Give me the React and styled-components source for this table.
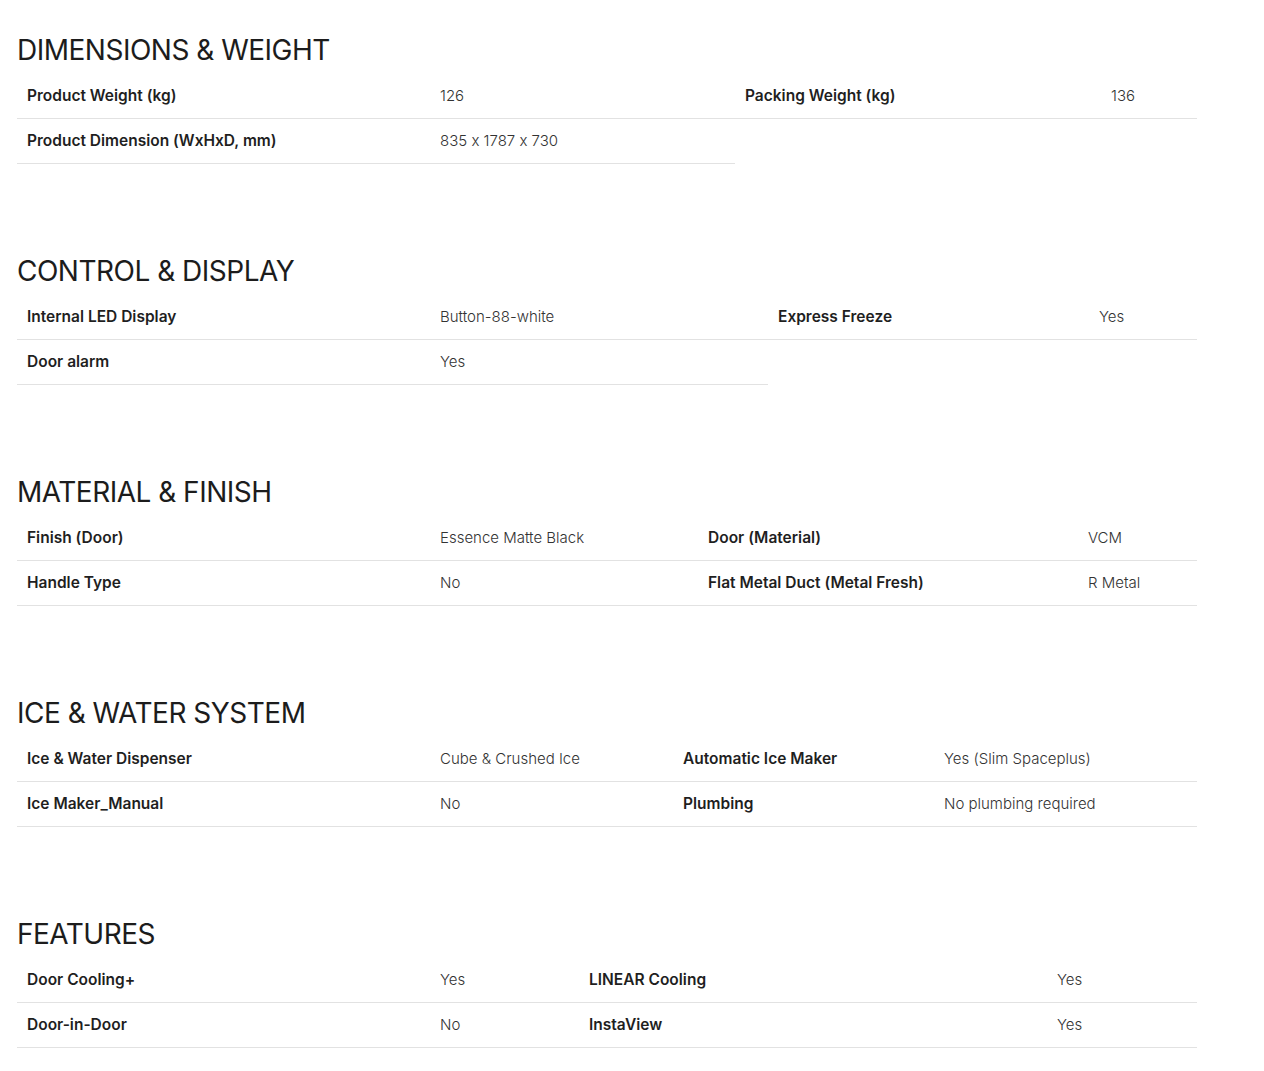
import React from 'react'
import styled, { createGlobalStyle } from 'styled-components';

const GlobalStyle = createGlobalStyle`
    body {
        margin: 0;
        background: #fff;
        font-family: "Inter", "Liberation Sans", sans-serif;
        font-feature-settings: "calt" 0;
        color: #222;
    }
`;

const SECTIONS = [
    {
        title: "DIMENSIONS & WEIGHT",
        cols: "413px 305px 366px 96px",
        rows: [
            [["Product Weight (kg)", "126"], ["Packing Weight (kg)", "136"]],
            [["Product Dimension (WxHxD, mm)", "835 x 1787 x 730"]],
        ],
    },
    {
        title: "CONTROL & DISPLAY",
        cols: "413px 338px 321px 108px",
        rows: [
            [["Internal LED Display", "Button-88-white"], ["Express Freeze", "Yes"]],
            [["Door alarm", "Yes"]],
        ],
    },
    {
        title: "MATERIAL & FINISH",
        cols: "413px 268px 380px 119px",
        rows: [
            [["Finish (Door)", "Essence Matte Black"], ["Door (Material)", "VCM"]],
            [["Handle Type", "No"], ["Flat Metal Duct (Metal Fresh)", "R Metal"]],
        ],
    },
    {
        title: "ICE & WATER SYSTEM",
        cols: "413px 243px 261px 263px",
        rows: [
            [["Ice & Water Dispenser", "Cube & Crushed Ice"], ["Automatic Ice Maker", "Yes (Slim Spaceplus)"]],
            [["Ice Maker_Manual", "No"], ["Plumbing", "No plumbing required"]],
        ],
    },
    {
        title: "FEATURES",
        cols: "413px 149px 468px 150px",
        rows: [
            [["Door Cooling+", "Yes"], ["LINEAR Cooling", "Yes"]],
            [["Door-in-Door", "No"], ["InstaView", "Yes"]],
        ],
    },
];

export default function App() {
    return (
        <StyledPage>
            <GlobalStyle />
            {SECTIONS.map(section => (
                <StyledSection key={section.title}>
                    <StyledTitle>{section.title}</StyledTitle>
                    <StyledSpecGrid cols={section.cols}>
                        {section.rows.map((row, r) => (
                            <React.Fragment key={r}>
                                {row.map(([label, value], i) => (
                                    <React.Fragment key={i}>
                                        <StyledCell bold>{label}</StyledCell>
                                        <StyledCell>{value}</StyledCell>
                                    </React.Fragment>
                                ))}
                                {row.length < 2 && <StyledEmpty />}
                            </React.Fragment>
                        ))}
                    </StyledSpecGrid>
                </StyledSection>
            ))}
        </StyledPage>
    )
}

// ========== //
//   LAYOUT   //
// ========== //
const StyledPage = styled.div`
    padding: 33px 17px 0;
    display: flex;
    flex-direction: column;
    gap: 90px;
`;

const StyledSection = styled.section`
    width: 1180px;
`;

const StyledTitle = styled.h2`
    margin: 0 0 7px;
    font-size: 28px;
    line-height: 34px;
    font-weight: 400;
    color: #1c1c1c;
    letter-spacing: -0.5px;
`;

const StyledSpecGrid = styled.div`
    display: grid;
    grid-template-columns: ${props => props.cols};
`;

const StyledCell = styled.div`
    height: 44px;
    padding: 0 10px 1px;
    box-sizing: border-box;
    height: 45px;
    display: flex;
    align-items: center;
    border-bottom: 1px solid #e2e2e2;
    font-size: ${props => props.bold ? "15.5px" : "15px"};
    font-weight: ${props => props.bold ? "600" : "300"};
    color: ${props => props.bold ? "#1f1f1f" : "#333"};
    white-space: nowrap;
`;

const StyledEmpty = styled.div`
    grid-column: span 2;
`;
